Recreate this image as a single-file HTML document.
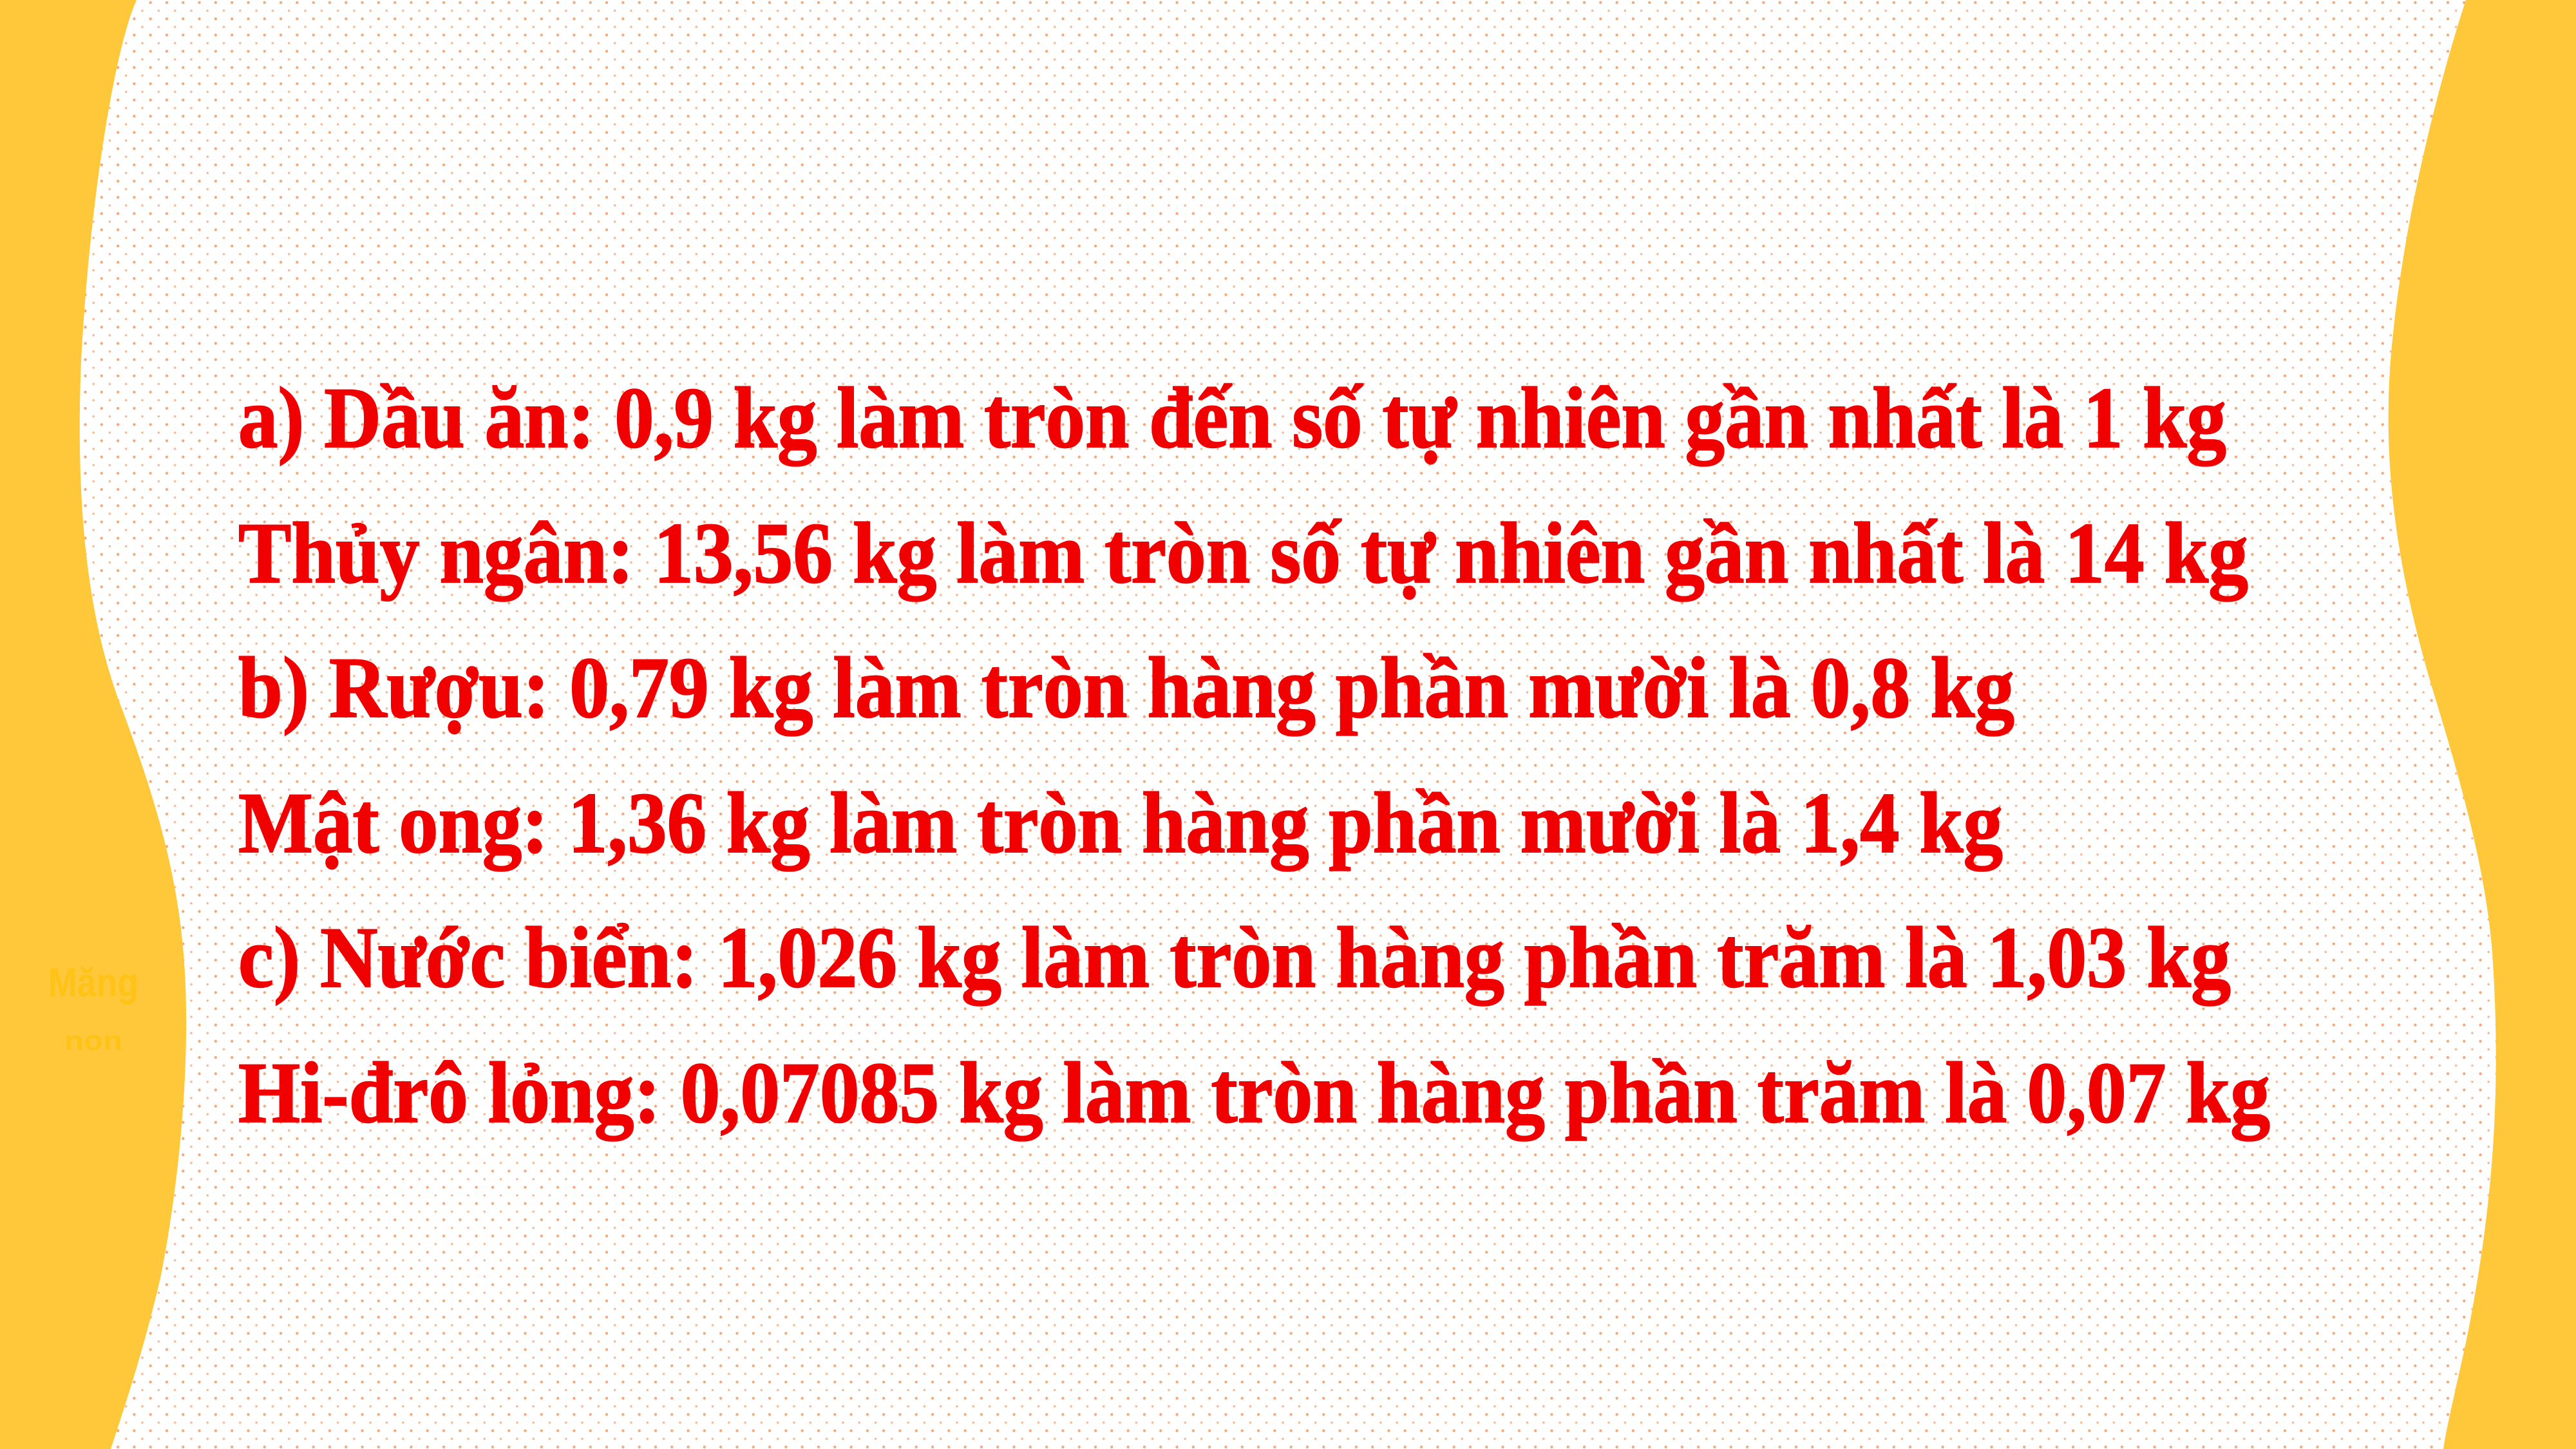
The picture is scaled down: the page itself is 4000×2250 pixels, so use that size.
<!DOCTYPE html>
<html><head><meta charset="utf-8"><style>
html,body{margin:0;padding:0;width:4000px;height:2250px;overflow:hidden;background:#fff}
svg{display:block}
</style></head><body>
<svg width="4000" height="2250" viewBox="0 0 4000 2250" xmlns="http://www.w3.org/2000/svg">
<defs>
<pattern id="dots" x="0" y="0" width="25.3" height="25.2" patternUnits="userSpaceOnUse">
<circle cx="6" cy="4" r="2.2" fill="#ef8a4a" opacity="0.75"/>
<circle cx="18.65" cy="16.6" r="1.8" fill="#ef8a4a" opacity="0.6"/>
</pattern>
</defs>
<rect width="4000" height="2250" fill="#fff"/>
<rect width="4000" height="2250" fill="url(#dots)"/>
<path fill="#ffc83a" d="M0 0 L212 0 C180 70 140 300 126 560 C118 760 130 950 191 1105 C230 1210 270 1330 283 1460 C298 1600 285 1800 250 1980 C225 2090 195 2180 172 2250 L0 2250 Z"/>
<path fill="#ffc83a" d="M4000 0 L3829 0 C3790 120 3730 340 3712 560 C3700 720 3720 880 3779 1076 C3820 1210 3860 1350 3870 1480 C3885 1700 3870 1880 3830 2080 C3815 2150 3800 2210 3794 2250 L4000 2250 Z"/>
<g font-family="'Liberation Sans','DejaVu Sans',sans-serif" font-weight="bold" fill="#ffc000" opacity="0.6">
<text x="75" y="1547" font-size="62" textLength="140" lengthAdjust="spacingAndGlyphs">Măng</text>
<text x="100" y="1630" font-size="42" textLength="90" lengthAdjust="spacingAndGlyphs">non</text>
</g>
<g font-family="'Liberation Serif',serif" font-weight="bold" font-size="135" fill="#f00000" stroke="#f00000" stroke-width="2">
<text x="370" y="694" textLength="3087" lengthAdjust="spacingAndGlyphs">a) Dầu ăn: 0,9 kg làm tròn đến số tự nhiên gần nhất là 1 kg</text>
<text x="370" y="904" textLength="3121" lengthAdjust="spacingAndGlyphs">Thủy ngân: 13,56 kg làm tròn số tự nhiên gần nhất là 14 kg</text>
<text x="370" y="1113" textLength="2758" lengthAdjust="spacingAndGlyphs">b) Rượu: 0,79 kg làm tròn hàng phần mười là 0,8 kg</text>
<text x="370" y="1323" textLength="2740" lengthAdjust="spacingAndGlyphs">Mật ong: 1,36 kg làm tròn hàng phần mười là 1,4 kg</text>
<text x="370" y="1532" textLength="3094" lengthAdjust="spacingAndGlyphs">c) Nước biển: 1,026 kg làm tròn hàng phần trăm là 1,03 kg</text>
<text x="370" y="1742" textLength="3155" lengthAdjust="spacingAndGlyphs">Hi-đrô lỏng: 0,07085 kg làm tròn hàng phần trăm là 0,07 kg</text>
</g>
</svg>
</body></html>
